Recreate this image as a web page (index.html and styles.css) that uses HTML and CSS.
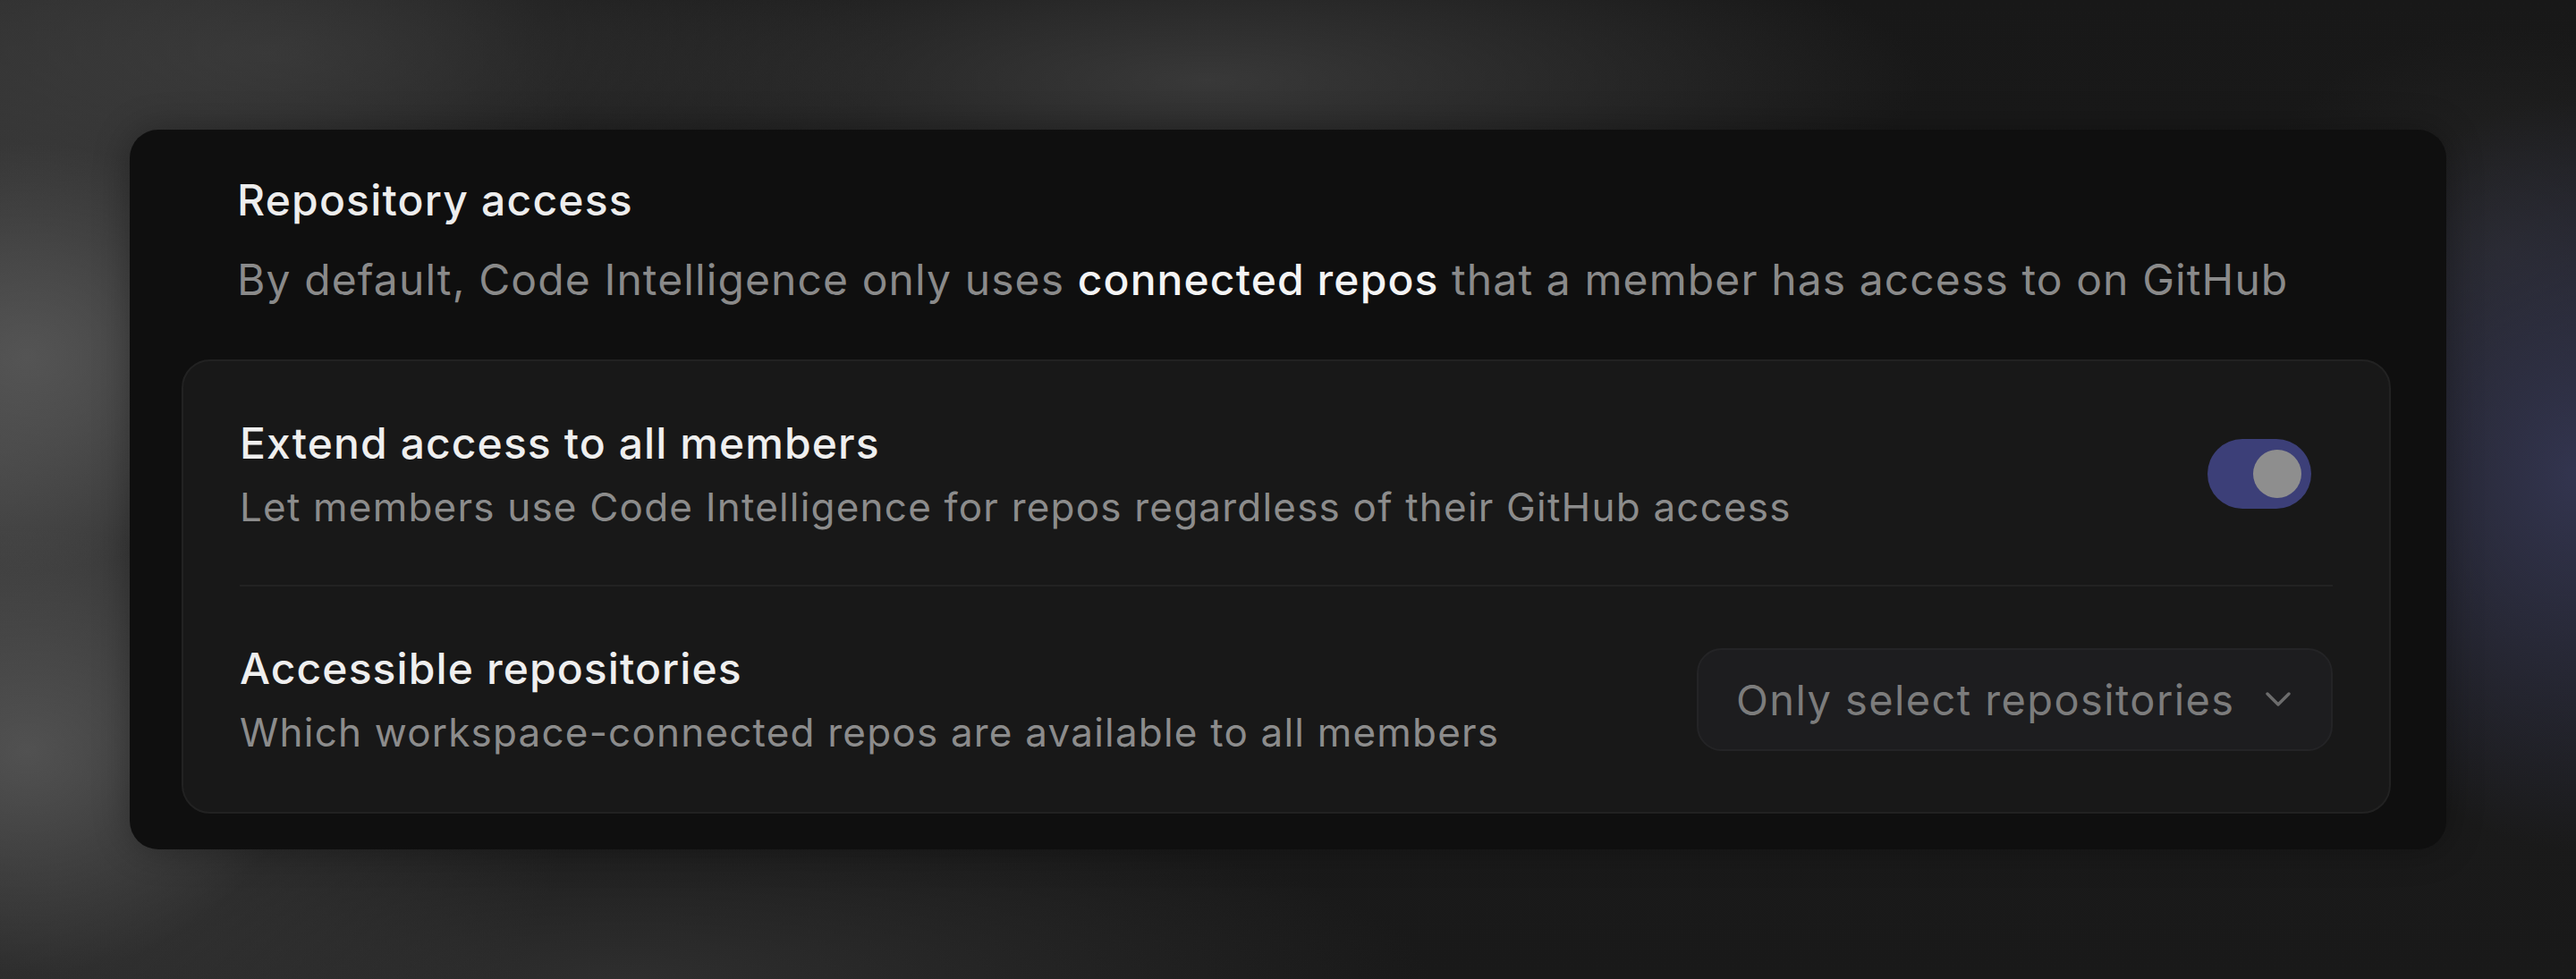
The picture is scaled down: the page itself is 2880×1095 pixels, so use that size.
FILE: index.html
```html
<!DOCTYPE html>
<html lang="en">
<head>
<meta charset="utf-8">
<title>Repository access</title>
<link rel="stylesheet" href="styles.css">
</head>
<body>
<div class="stage">
  <section class="panel">
    <header class="panel-head">
      <h2 class="panel-title">Repository access</h2>
      <p class="panel-desc">By default, Code Intelligence only uses <span class="hl">connected repos</span> that a member has access to on GitHub</p>
    </header>
    <div class="box">
      <div class="row">
        <div class="row-text">
          <div class="row-title">Extend access to all members</div>
          <div class="row-desc">Let members use Code Intelligence for repos regardless of their GitHub access</div>
        </div>
        <div class="toggle"><span class="knob"></span></div>
      </div>
      <div class="divider"></div>
      <div class="row row-last">
        <div class="row-text">
          <div class="row-title">Accessible repositories</div>
          <div class="row-desc">Which workspace-connected repos are available to all members</div>
        </div>
        <div class="select">
          <span class="select-label">Only select repositories</span>
          <svg class="chev" viewBox="0 0 30 18" width="30" height="18"><path d="M3 3 L15 15 L27 3" fill="none" stroke="currentColor" stroke-width="3.4" stroke-linecap="round" stroke-linejoin="round"/></svg>
        </div>
      </div>
    </div>
  </section>
</div>
</body>
</html>
```
FILE: styles.css
```css
html, body {
  margin: 0;
  padding: 0;
}
body {
  width: 2880px;
  height: 1095px;
  overflow: hidden;
  font-family: Inter, "Noto Sans", "Liberation Sans", sans-serif;
  background-color: #1a1a1a;
  background-image:
    radial-gradient(ellipse 280px 240px at 30px 400px, rgba(90,90,90,0.8), rgba(90,90,90,0) 100%),
    radial-gradient(ellipse 300px 250px at 30px 840px, rgba(88,88,88,0.8), rgba(88,88,88,0) 100%),
    radial-gradient(ellipse 700px 1000px at 0px 520px, rgba(66,66,66,1), rgba(66,66,66,0) 100%),
    radial-gradient(ellipse 700px 220px at 300px 60px, rgba(58,58,58,0.8), rgba(58,58,58,0) 100%),
    radial-gradient(ellipse 800px 190px at 1350px 90px, rgba(62,62,62,0.85), rgba(62,62,62,0) 100%),
    radial-gradient(ellipse 900px 200px at 700px 1095px, rgba(58,58,58,0.65), rgba(58,58,58,0) 100%),
    radial-gradient(ellipse 320px 420px at 2880px 530px, rgba(52,54,82,0.95), rgba(52,54,82,0) 100%),
    radial-gradient(ellipse 300px 250px at 2800px 280px, rgba(45,45,45,0.6), rgba(45,45,45,0) 100%),
    linear-gradient(180deg, #181818 0%, #1c1c1c 50%, #191919 100%);
}
.stage {
  padding: 145px 145px 0 145px;
}
.panel {
  width: 2590px;
  height: 805px;
  box-sizing: border-box;
  background: #0f0f0f;
  border-radius: 32px;
  padding: 50px 62px 40px 58px;
  box-shadow: 0 0 40px rgba(0,0,0,0.3);
}
.panel-head {
  padding-left: 62px;
}
.panel-title {
  margin: 0;
  font-size: 48px;
  line-height: 58px;
  font-weight: 500;
  letter-spacing: 1.2px;
  color: #ededed;
}
.panel-desc {
  margin: 31px 0 0 0;
  font-size: 48px;
  line-height: 58px;
  font-weight: 400;
  letter-spacing: 1.1px;
  color: #8a8a8a;
}
.hl {
  color: #f4f4f4;
  font-weight: 500;
}
.box {
  margin-top: 60px;
  background: #181818;
  border: 2px solid #222222;
  border-radius: 32px;
  padding: 0 63px;
}
.row {
  display: flex;
  align-items: center;
  justify-content: space-between;
  padding: 63px 0 61px 0;
}
.row-last {
  padding-bottom: 63px;
}
.row-title {
  font-size: 48px;
  line-height: 58px;
  font-weight: 500;
  letter-spacing: 1.1px;
  color: #efefef;
}
.row-desc {
  margin-top: 16px;
  font-size: 44px;
  line-height: 52px;
  font-weight: 400;
  letter-spacing: 1.2px;
  color: #8c8c8c;
}
.divider {
  height: 2px;
  background: #222222;
}
.toggle {
  width: 116px;
  height: 78px;
  box-sizing: border-box;
  border-radius: 39px;
  background: #3c3f78;
  margin-right: 24px;
  display: flex;
  align-items: center;
  justify-content: flex-end;
  padding: 0 11px;
}
.knob {
  width: 54px;
  height: 54px;
  border-radius: 50%;
  background: #8e8e8e;
}
.select {
  width: 711px;
  height: 115px;
  box-sizing: border-box;
  background: #1d1d1f;
  border: 2px solid #242426;
  border-radius: 28px;
  display: flex;
  align-items: center;
  justify-content: space-between;
  padding: 0 44px 0 42px;
}
.select-label {
  font-size: 47px;
  font-weight: 400;
  letter-spacing: 1.4px;
  color: #7c7c7c;
}
.chev {
  color: #6c6c6c;
  display: block;
}
```
